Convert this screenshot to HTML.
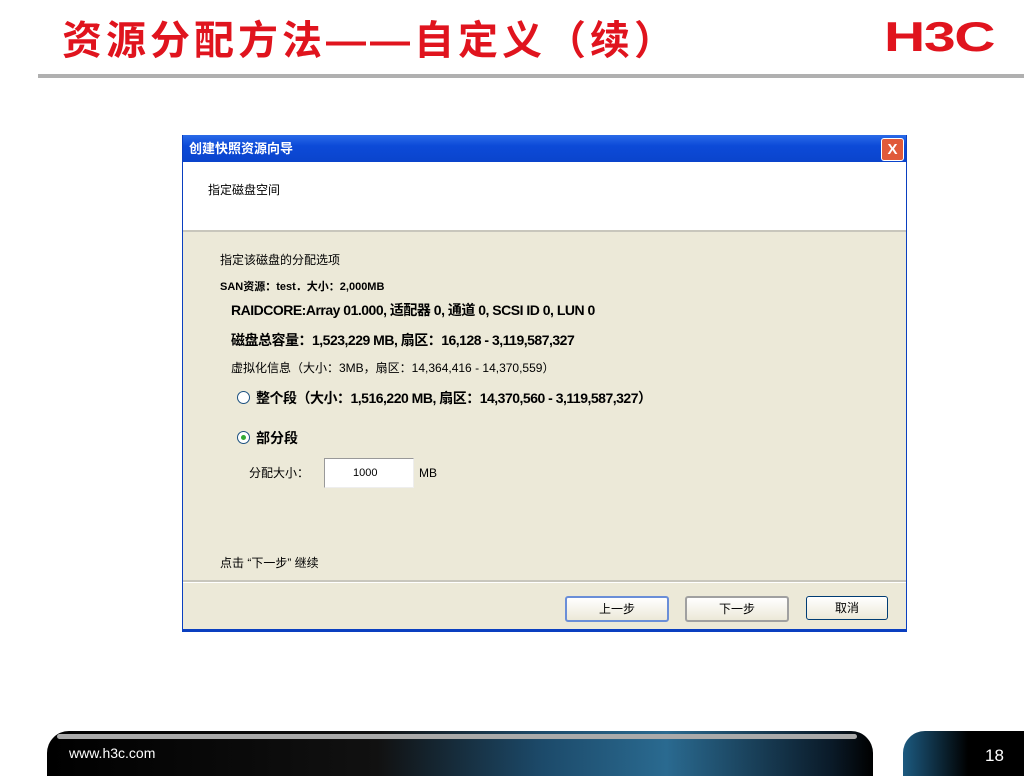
<!DOCTYPE html>
<html><head><meta charset="utf-8"><style>
body{margin:0;width:1024px;height:768px;background:#fff;position:relative;overflow:hidden;font-family:"Liberation Sans","Noto Sans CJK SC",sans-serif}
.a{position:absolute}
.title{left:62px;top:16px;font-size:40px;font-weight:bold;color:#e0141e;letter-spacing:4px;white-space:nowrap;line-height:50px}
.rule{left:38px;top:74px;width:986px;height:4px;background:#b0b0b0}
.logo{left:884px;top:13px;font-size:42px;font-weight:bold;color:#e0141e;letter-spacing:-1px;transform:scaleX(1.36);transform-origin:left;font-family:"Liberation Sans",sans-serif}
.dlg{left:182px;top:135px;width:723px;height:494px;border:1px solid #0a3fc0;border-top:none;border-bottom:3px solid #0a3fc0;background:#ece9d8}
.tb{left:0;top:0;width:723px;height:27px;background:linear-gradient(#2a6ae8,#0c4ad8 40%,#0a44cc);color:#fff;font-size:13px;font-weight:bold;line-height:27px;text-indent:6px}
.x{right:2px;top:3px;width:21px;height:21px;background:#e05a3a;border:1px solid #fff;border-radius:3px;color:#fff;font-size:15px;text-align:center;line-height:21px;font-weight:bold}
.hd{left:0;top:27px;width:723px;height:68px;background:#fff;border-bottom:2px solid #c8c6bc}
.t{font-size:12px;color:#000;white-space:nowrap}
.b{font-weight:bold}
.radio{width:11px;height:11px;border:1px solid #1c5180;border-radius:50%;background:#fff}
.btn{top:461px;width:100px;height:22px;border:1px solid #003c74;border-radius:3px;background:linear-gradient(#fff,#ece9d8);font-size:12px;text-align:center;line-height:22px}
.foot{left:47px;top:731px;width:826px;height:45px;border-radius:22px 22px 0 0;background:linear-gradient(90deg,#000 0,#111 40%,#1c4a6a 60%,#2a6a90 75%,#0a1a28 95%,#000);overflow:hidden}
.foot2{left:903px;top:731px;width:130px;height:45px;border-radius:22px 0 0 0;background:linear-gradient(90deg,#1c5a80,#000 50%,#000)}
</style></head><body>
<div class="a title">资源分配方法——自定义（续）</div>
<div class="a logo">H3C</div>
<div class="a rule"></div>

<div class="a dlg">
 <div class="a tb">创建快照资源向导</div>
 <div class="a x">X</div>
 <div class="a hd"><div class="a t" style="left:25px;top:19px">指定磁盘空间</div></div>
 <div class="a t" style="left:37px;top:116px">指定该磁盘的分配选项</div>
 <div class="a t b" style="left:37px;top:143px;font-size:11px">SAN资源：test．大小：2,000MB</div>
 <div class="a t b" style="left:48px;top:165px;font-size:14px;letter-spacing:-0.5px">RAIDCORE:Array 01.000, 适配器 0, 通道 0, SCSI ID 0, LUN 0</div>
 <div class="a t b" style="left:48px;top:195px;font-size:14px;letter-spacing:-0.5px">磁盘总容量：1,523,229 MB, 扇区：16,128 - 3,119,587,327</div>
 <div class="a t" style="left:48px;top:224px">虚拟化信息（大小：3MB，扇区：14,364,416 - 14,370,559）</div>
 <div class="a radio" style="left:54px;top:256px"></div>
 <div class="a t b" style="left:73px;top:253px;font-size:14px;letter-spacing:-0.5px">整个段（大小：1,516,220 MB, 扇区：14,370,560 - 3,119,587,327）</div>
 <div class="a radio" style="left:54px;top:296px"><div style="width:5px;height:5px;background:#3a3;border-radius:50%;margin:3px"></div></div>
 <div class="a t b" style="left:73px;top:293px;font-size:14px">部分段</div>
 <div class="a t" style="left:66px;top:329px">分配大小：</div>
 <div class="a" style="left:141px;top:323px;width:88px;height:28px;background:#fff;border:1px solid #7f9db9;border-color:#999 #eee #eee #999"></div>
 <div class="a t" style="left:170px;top:332px;font-size:11px">1000</div>
 <div class="a t" style="left:236px;top:331px">MB</div>
 <div class="a t" style="left:37px;top:419px">点击 “下一步” 继续</div>
 <div class="a" style="left:0;top:445px;width:723px;height:2px;background:#c8c6bc;border-bottom:1px solid #fff"></div>
 <div class="a btn" style="left:382px;border:2px solid #6a8ed8">上一步</div>
 <div class="a btn" style="left:502px;border:2px solid #a0a0a0">下一步</div>
 <div class="a btn" style="left:623px;width:80px">取消</div>
</div>

<div class="a foot"><div class="a" style="left:10px;top:3px;width:800px;height:5px;border-radius:3px;background:#aaa"></div><div class="a" style="left:22px;top:14px;color:#fff;font-size:14px">www.h3c.com</div></div>
<div class="a foot2"><div class="a" style="left:82px;top:15px;color:#fff;font-size:17px">18</div></div>
</body></html>
